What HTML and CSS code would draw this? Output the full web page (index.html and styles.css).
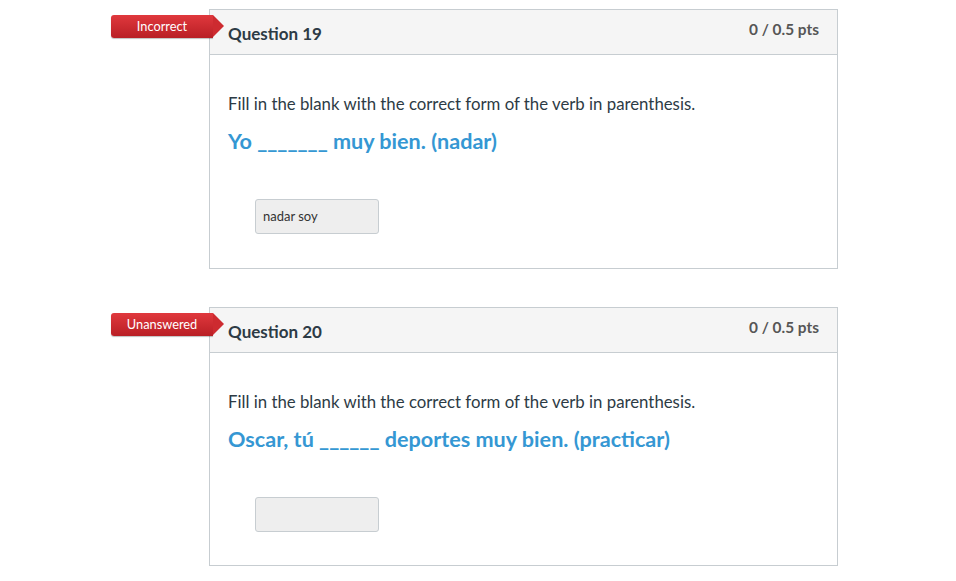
FILE: index.html
```html
<!DOCTYPE html>
<html>
<head>
<meta charset="utf-8">
<link rel="stylesheet" href="styles.css">
</head>
<body>
<div class="quiz">
  <div class="question">
    <div class="flag">Incorrect</div>
    <div class="q-header">
      <span class="q-title">Question 19</span>
      <span class="q-pts">0 / 0.5 pts</span>
    </div>
    <div class="q-body">
      <p class="q-text">Fill in the blank with the correct form of the verb in parenthesis.</p>
      <p class="q-prompt">Yo _______ muy bien. (nadar)</p>
      <div class="answer">nadar soy</div>
    </div>
  </div>
  <div class="question">
    <div class="flag">Unanswered</div>
    <div class="q-header">
      <span class="q-title">Question 20</span>
      <span class="q-pts">0 / 0.5 pts</span>
    </div>
    <div class="q-body">
      <p class="q-text">Fill in the blank with the correct form of the verb in parenthesis.</p>
      <p class="q-prompt">Oscar, tú ______ deportes muy bien. (practicar)</p>
      <div class="answer"></div>
    </div>
  </div>
</div>
</body>
</html>
```

FILE: styles.css
```css
* { box-sizing: border-box; }
body {
  margin: 0;
  background: #fff;
  font-family: Lato, "Open Sans", sans-serif;
  color: #2d3b45;
}
.quiz {
  padding-top: 9px;
  margin-left: 209px;
  width: 629px;
  display: flex;
  flex-direction: column;
  gap: 38px;
}
.question {
  position: relative;
  border: 1px solid #c7cdd1;
  height: 260px;
}
.question + .question { height: 259px; }
.flag {
  position: absolute;
  left: -99px;
  top: 5px;
  width: 102px;
  height: 23px;
  background: linear-gradient(#e0383d, #b91f25);
  color: #fff;
  font-size: 12.8px;
  line-height: 23px;
  text-align: center;
  border-radius: 3px 0 0 3px;
  box-shadow: 0 1px 1px rgba(0,0,0,0.25);
}
.flag::after {
  content: "";
  position: absolute;
  right: -11px;
  top: 0;
  border-top: 11.5px solid transparent;
  border-bottom: 11.5px solid transparent;
  border-left: 11px solid #cd2b30;
}
.q-header {
  height: 45px;
  background: #f5f5f5;
  border-bottom: 1px solid #c7cdd1;
  display: flex;
  justify-content: space-between;
  align-items: flex-start;
  padding: 0 18px 0 18px;
}
.q-title {
  font-weight: bold;
  font-size: 17px;
  margin-top: 13px;
  color: #2d3b45;
}
.q-pts {
  font-weight: bold;
  font-size: 15.4px;
  margin-top: 10px;
  color: #565656;
}
.q-body {
  padding: 36px 18px 0 18px;
}
.q-text {
  margin: 0;
  font-size: 16.8px;
  line-height: 25px;
}
.q-prompt {
  margin: 10px 0 0 0;
  font-size: 21.6px;
  line-height: 31px;
  font-weight: bold;
  color: #3597d3;
}
.answer {
  margin: 42px 0 0 27px;
  width: 124px;
  height: 35px;
  background: #eeeeee;
  border: 1px solid #c7cdd1;
  border-radius: 3px;
  font-size: 13px;
  line-height: 33px;
  padding-left: 7px;
  color: #333;
}
```
